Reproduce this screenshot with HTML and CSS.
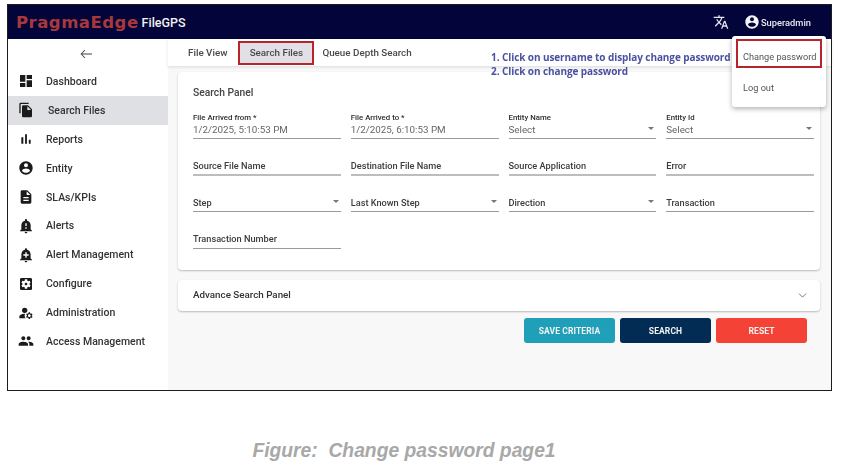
FILE: index.html
```html
<!DOCTYPE html>
<html lang="en">
<head>
<meta charset="utf-8">
<title>FileGPS - Search Files</title>
<link rel="stylesheet" href="styles.css">
</head>
<body>
<div class="window">
  <header class="topbar">
    <div class="brand"><span class="logo">PragmaEdge</span><span class="product">FileGPS</span></div>
    <div class="top-actions">
      <svg class="translate" viewBox="0 0 24 24"><path d="M12.87 15.07l-2.54-2.51.03-.03c1.74-1.94 2.98-4.17 3.71-6.53H17V4h-7V2H8v2H1v1.99h11.17C11.5 7.92 10.44 9.75 9 11.35 8.07 10.32 7.3 9.19 6.69 8h-2c.73 1.63 1.73 3.17 2.98 4.56l-5.09 5.02L4 19l5-5 3.11 3.11.76-2.04zM18.5 10h-2L12 22h2l1.12-3h4.75L21 22h2l-4.5-12zm-2.62 7l1.62-4.33L19.12 17h-3.24z"/></svg>
      <div class="user">
        <svg class="user-icon" viewBox="0 0 24 24"><path d="M12 2C6.48 2 2 6.48 2 12s4.48 10 10 10 10-4.48 10-10S17.52 2 12 2zm0 3c1.66 0 3 1.34 3 3s-1.34 3-3 3-3-1.34-3-3 1.34-3 3-3zm0 14.2c-2.5 0-4.71-1.28-6-3.22.03-1.99 4-3.08 6-3.08 1.99 0 5.97 1.09 6 3.08-1.29 1.94-3.5 3.22-6 3.22z"/></svg>
        <span>Superadmin</span>
      </div>
    </div>
  </header>
  <div class="layout">
    <nav class="sidebar">
      <div class="back">
        <svg viewBox="0 0 24 24"><path d="M21 11.3H6.2l4.6-4.6-.9-.9L3.800 12l6.100 6.200.9-.9-4.600-4.700H21z"/></svg>
      </div>
      <a class="nav-item"><svg viewBox="0 0 24 24"><path d="M3 13h8V3H3v10zm0 8h8v-6H3v6zm10 0h8V11h-8v10zm0-18v6h8V3h-8z"/></svg><span>Dashboard</span></a>
      <a class="nav-item active"><svg viewBox="0 0 24 24"><path d="M16 1H4c-1.100 0-2 .9-2 2v14h2V3h12V1zm-1 4l6 6v10c0 1.100-.9 2-2 2H7.990C6.890 23 6 22.100 6 21l.01-14c0-1.100.89-2 1.990-2h7zm-1 7h5.500L14 6.500V12z"/></svg><span>Search Files</span></a>
      <a class="nav-item"><svg viewBox="0 0 24 24"><path d="M5 9.200h3V19H5zM10.600 5h2.800v14h-2.800zm5.600 8H19v6h-2.800z"/></svg><span>Reports</span></a>
      <a class="nav-item"><svg viewBox="0 0 24 24"><path d="M12 2C6.480 2 2 6.480 2 12s4.480 10 10 10 10-4.480 10-10S17.520 2 12 2zm0 3c1.660 0 3 1.340 3 3s-1.340 3-3 3-3-1.340-3-3 1.340-3 3-3zm0 14.200c-2.500 0-4.710-1.280-6-3.220.03-1.990 4-3.080 6-3.080 1.990 0 5.970 1.090 6 3.080-1.290 1.940-3.500 3.220-6 3.220z"/></svg><span>Entity</span></a>
      <a class="nav-item"><svg viewBox="0 0 24 24"><path d="M14 2H6c-1.100 0-1.990.9-1.990 2L4 20c0 1.100.89 2 1.990 2H18c1.100 0 2-.9 2-2V8l-6-6zm2 16H8v-2h8v2zm0-4H8v-2h8v2zm-3-5V3.500L18.500 9H13z"/></svg><span>SLAs/KPIs</span></a>
      <a class="nav-item"><svg viewBox="0 0 24 24"><path d="M12 23c1.100 0 1.990-.9 1.990-2h-3.980c0 1.100.89 2 1.990 2zm7-6v-6c0-3.350-2.360-6.150-5.500-6.830V3c0-.83-.67-1.500-1.500-1.500s-1.500.67-1.500 1.500v1.170C7.360 4.850 5 7.650 5 11v6l-2 2v1h18v-1l-2-2zm-6-1h-2v-2h2v2zm0-4h-2V8h2v4z"/></svg><span>Alerts</span></a>
      <a class="nav-item"><svg viewBox="0 0 24 24"><path d="M10.010 21.010c0 1.100.89 1.990 1.990 1.990s1.990-.89 1.990-1.990h-3.980zm8.870-4.190V11c0-3.250-2.250-5.970-5.290-6.690v-.72C13.590 2.710 12.880 2 12 2s-1.590.71-1.590 1.590v.72C7.370 5.030 5.120 7.750 5.120 11v5.820L3 18.940V20h18v-1.060l-2.120-2.120zM16 13.010h-3v3h-2v-3H8V11h3V8h2v3h3v2.010z"/></svg><span>Alert Management</span></a>
      <a class="nav-item"><svg viewBox="0 0 24 24"><path d="M12 10c-1.100 0-2 .9-2 2s.9 2 2 2 2-.9 2-2-.9-2-2-2zm7-7H5c-1.110 0-2 .9-2 2v14c0 1.100.89 2 2 2h14c1.110 0 2-.9 2-2V5c0-1.100-.89-2-2-2zm-1.750 9c0 .23-.02.46-.05.68l1.480 1.160c.13.11.17.3.08.45l-1.400 2.420c-.09.15-.27.21-.43.15l-1.740-.7c-.36.28-.76.51-1.180.69l-.26 1.850c-.03.17-.18.3-.35.3h-2.800c-.17 0-.32-.13-.35-.29l-.26-1.850c-.43-.18-.82-.41-1.180-.69l-1.740.7c-.16.06-.34 0-.43-.15l-1.400-2.420c-.09-.15-.05-.34.08-.45l1.480-1.160c-.03-.23-.05-.46-.05-.69 0-.23.02-.46.05-.68l-1.480-1.160c-.13-.11-.17-.3-.08-.45l1.400-2.420c.09-.15.27-.21.43-.15l1.740.7c.36-.28.76-.51 1.180-.69l.26-1.850c.03-.17.18-.3.35-.3h2.800c.17 0 .32.13.35.29l.26 1.850c.43.18.82.41 1.180.69l1.740-.7c.16-.06.34 0 .43.15l1.400 2.420c.09.15.05.34-.08.45l-1.480 1.160c.03.23.05.46.05.69z"/></svg><span>Configure</span></a>
      <a class="nav-item"><svg viewBox="0 0 24 24"><circle cx="10" cy="8" r="4"/><path d="M10.670 13.020C10.450 13.010 10.230 13 10 13c-2.420 0-4.680.67-6.610 1.820-.88.52-1.390 1.500-1.390 2.530V20h9.260c-.79-1.130-1.260-2.510-1.260-4 0-1.070.25-2.070.67-2.980zM20.750 16c0-.22-.03-.42-.06-.63l1.140-1.010-1-1.730-1.450.49c-.32-.27-.68-.48-1.080-.63L18 11h-2l-.3 1.490c-.4.15-.76.36-1.080.63l-1.450-.49-1 1.730 1.140 1.010c-.03.21-.06.41-.06.63s.03.42.06.63l-1.140 1.010 1 1.730 1.450-.49c.32.27.68.48 1.080.63L16 21h2l.3-1.490c.4-.15.76-.36 1.080-.63l1.450.49 1-1.730-1.140-1.010c.03-.21.06-.41.06-.63zM17 18c-1.100 0-2-.9-2-2s.9-2 2-2 2 .9 2 2-.9 2-2 2z"/></svg><span>Administration</span></a>
      <a class="nav-item"><svg viewBox="0 0 24 24"><path d="M16 11c1.660 0 2.990-1.340 2.990-3S17.660 5 16 5c-1.660 0-3 1.340-3 3s1.340 3 3 3zm-8 0c1.660 0 2.990-1.340 2.990-3S9.660 5 8 5C6.340 5 5 6.340 5 8s1.340 3 3 3zm0 2c-2.330 0-7 1.170-7 3.500V19h14v-2.500c0-2.330-4.670-3.500-7-3.500zm8 0c-.29 0-.62.02-.97.05 1.160.84 1.970 1.970 1.970 3.450V19h6v-2.500c0-2.330-4.670-3.500-7-3.500z"/></svg><span>Access Management</span></a>
    </nav>
    <main class="main">
      <div class="tabs">
        <span class="tab">File View</span>
        <span class="tab tab-active">Search Files</span>
        <span class="tab">Queue Depth Search</span>
      </div>
      <div class="content">
        <section class="card panel">
          <h2 class="panel-title">Search Panel</h2>
          <div class="fields">
            <div class="field filled"><label>File Arrived from *</label><div class="value">1/2/2025, 5:10:53 PM</div></div>
            <div class="field filled"><label>File Arrived to *</label><div class="value">1/2/2025, 6:10:53 PM</div></div>
            <div class="field filled select"><label>Entity Name</label><div class="value">Select</div></div>
            <div class="field filled select"><label>Entity Id</label><div class="value">Select</div></div>
            <div class="field thick"><div class="placeholder">Source File Name</div></div>
            <div class="field thick"><div class="placeholder">Destination File Name</div></div>
            <div class="field thick"><div class="placeholder">Source Application</div></div>
            <div class="field thick"><div class="placeholder">Error</div></div>
            <div class="field select"><div class="placeholder">Step</div></div>
            <div class="field select"><div class="placeholder">Last Known Step</div></div>
            <div class="field select"><div class="placeholder">Direction</div></div>
            <div class="field"><div class="placeholder">Transaction</div></div>
            <div class="field"><div class="placeholder">Transaction Number</div></div>
          </div>
        </section>
        <section class="card accordion">
          <span>Advance Search Panel</span>
          <svg viewBox="0 0 24 24"><path d="M5.500 8.500L12 15l6.500-6.500" fill="none" stroke="#777" stroke-width="1.800"/></svg>
        </section>
        <div class="actions">
          <button class="btn teal">SAVE CRITERIA</button>
          <button class="btn navy">SEARCH</button>
          <button class="btn red">RESET</button>
        </div>
      </div>
    </main>
  </div>
  <div class="note">
    <div>1. Click on username to display change password</div>
    <div>2. Click on change password</div>
  </div>
  <div class="menu">
    <div class="menu-item menu-hl">Change password</div>
    <div class="menu-item">Log out</div>
  </div>
</div>
<p class="caption">Figure:&nbsp; Change password page1</p>
</body>
</html>
```

FILE: styles.css
```css
* { box-sizing: border-box; }
html, body { margin: 0; height: 100%; background: #fff; overflow: hidden; }
body { padding: 4px 13px 0 7px; font-family: Roboto, "Liberation Sans", sans-serif; color: #2b2b2b; }

.window {
  position: relative;
  width: 825px;
  height: 387px;
  border: 1px solid #1c1c1c;
  display: flex;
  flex-direction: column;
  filter: blur(0.4px);
}

.topbar {
  height: 34px;
  flex: none;
  background: #02043a;
  display: flex;
  align-items: center;
  justify-content: space-between;
  padding: 0 20px 0 8px;
  color: #fff;
}
.brand { display: flex; align-items: center; gap: 3px; }
.logo {
  font-family: "DejaVu Sans", sans-serif;
  font-weight: 700;
  font-size: 16.500px;
  letter-spacing: .5px;
  color: #a8383c;
}
.product { font-size: 12.500px; font-weight: 500; color: #f2f2f2; }
.top-actions { display: flex; align-items: center; gap: 15px; }
.translate { width: 16px; height: 16px; fill: #e8e8f0; }
.user { display: flex; align-items: center; gap: 1px; font-size: 9.300px; font-weight: 500; color: #e8e8f0; }
.user-icon { width: 16px; height: 16px; fill: #f4f4f8; }

.layout { flex: 1; display: flex; min-height: 0; }

.sidebar { width: 160px; flex: none; background: #fff; display: flex; flex-direction: column; }
.back { height: 28px; padding: 1px 0 0 70px; display: flex; align-items: center; }
.back svg { width: 16px; height: 16px; fill: #444; }
.nav-item {
  height: 28.900px;
  flex: none;
  display: flex;
  align-items: center;
  padding-left: 10px;
  font-size: 10.500px;
  font-weight: 500;
  color: #333;
}
.nav-item svg { width: 16px; height: 16px; fill: #1b1b1b; flex: none; margin-right: 12px; }
.nav-item.active { background: #dfe0e4; }
.nav-item.active span { margin-left: 2px; }

.main { flex: 1; min-width: 0; background: #f8f8f8; display: flex; flex-direction: column; }
.tabs {
  height: 27px;
  flex: none;
  background: #fff;
  box-shadow: 0 1px 3px rgba(0,0,0,.12);
  display: flex;
  align-items: center;
  padding-left: 20px;
  font-size: 9.800px;
  font-weight: 500;
  color: #4a4a4a;
}
.tab { display: block; }
.tab-active {
  margin: 0 8px 0 11px;
  width: 76px;
  height: 24px;
  line-height: 20px;
  text-align: center;
  background: #e0e0e6;
  border: 2px solid #b8242c;
}

.content { flex: 1; padding: 6px 11px 0 10px; }
.card { background: #fff; border-radius: 4px; box-shadow: 0 1px 2px rgba(0,0,0,.25); }
.panel { height: 198px; padding: 14px 6px 0 15px; }
.panel-title { margin: 0 0 13px; font-size: 10.300px; line-height: 13px; font-weight: 500; color: #444; }
.fields { display: grid; grid-template-columns: repeat(4, 1fr); column-gap: 10px; row-gap: 10px; }
.field { position: relative; height: 26.500px; border-bottom: 1px solid #9a9a9a; display: flex; flex-direction: column; justify-content: flex-end; padding-bottom: 2px; }
.field:last-child { padding-bottom: 3px; }
.field.filled { height: 27px; }
.field.thick { border-bottom: 2px solid #bdbdbd; }
.field.select::after {
  content: "";
  position: absolute;
  right: 2px;
  bottom: 8px;
  border: 3px solid transparent;
  border-top: 3.500px solid #777;
  border-bottom: 0;
}
.field label { font-size: 7.800px; line-height: 11px; font-weight: 500; color: #2c2c2c; }
.value { font-size: 9.800px; line-height: 13px; color: #666; }
.placeholder { font-size: 9.200px; line-height: 13px; font-weight: 500; color: #3c3c3c; }

.accordion {
  margin-top: 10px;
  height: 31px;
  display: flex;
  align-items: center;
  justify-content: space-between;
  padding: 0 11px 2px 15px;
  font-size: 9.800px;
  font-weight: 500;
  color: #333;
}
.accordion svg { width: 13px; height: 13px; margin-top: 2px; }

.actions { display: flex; justify-content: flex-end; gap: 5px; margin-top: 7px; padding-right: 13px; }
.btn {
  width: 91px;
  height: 25px;
  border: 0;
  border-radius: 3px;
  color: #f2f2f2;
  font-family: Roboto, "Liberation Sans", sans-serif;
  font-size: 8.500px;
  font-weight: 700;
  letter-spacing: .1px;
}
.teal { background: #1f9fb8; }
.navy { background: #022c54; }
.red { background: #f44336; }

.note {
  position: absolute;
  left: 483px;
  top: 45px;
  font-family: "Open Sans", sans-serif;
  font-size: 10px;
  line-height: 14px;
  font-weight: 700;
  letter-spacing: -.085px;
  color: #4a519f;
  white-space: nowrap;
}

.menu {
  position: absolute;
  left: 724px;
  top: 31px;
  width: 94px;
  height: 71px;
  background: #fff;
  border-radius: 3px;
  box-shadow: 0 2px 5px rgba(0,0,0,.3);
  padding-top: 3px;
}
.menu-item { height: 29px; margin: 0 4px; padding-left: 5px; font-size: 9.200px; color: #555; white-space: nowrap; }
.menu-item + .menu-item { margin-top: 6px; padding-left: 7px; line-height: 27px; }
.menu-hl { border: 2px solid #b8242c; padding-left: 5px; line-height: 31px; }

.caption {
  margin: 49px 0 0;
  width: 794px;
  text-align: center;
  font-family: "Liberation Sans", Arial, sans-serif;
  font-size: 19.300px;
  line-height: 22px;
  font-style: italic;
  font-weight: 700;
  color: #a8a8a8;
  white-space: nowrap;
}
```
